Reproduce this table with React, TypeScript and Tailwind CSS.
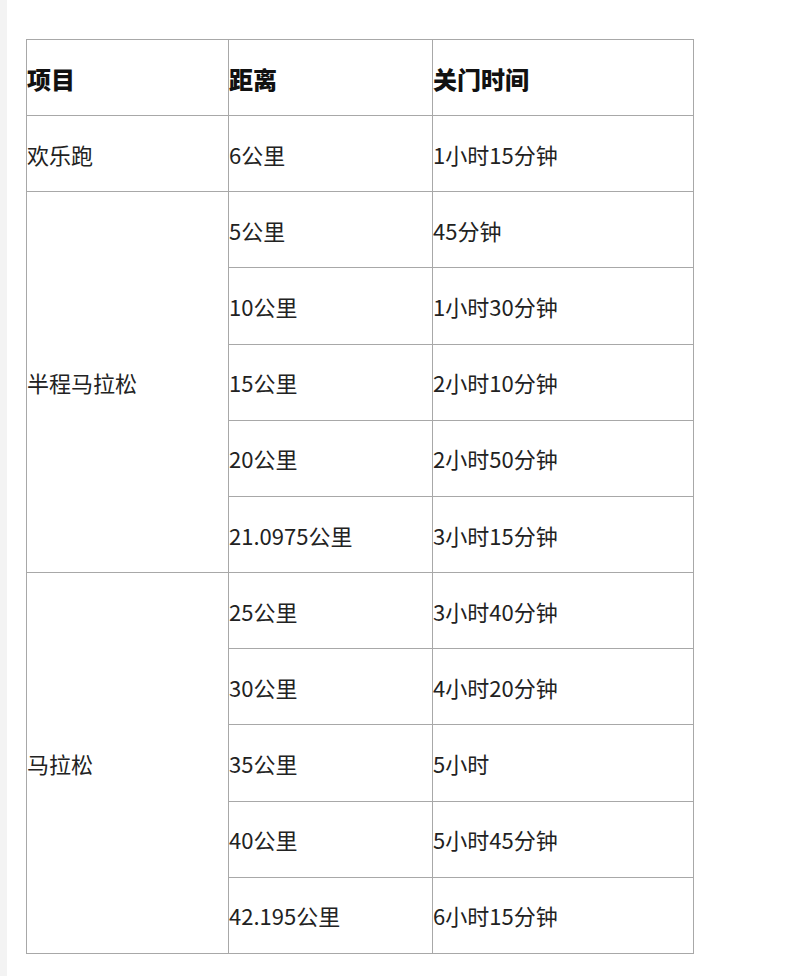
import React from "react";

const font = { fontFamily: '"Noto Sans CJK SC", "Noto Sans", sans-serif' };

type Row = { item?: string; span?: number; dist: string; time: string };

const rows: Row[] = [
  { item: "欢乐跑", span: 1, dist: "6公里", time: "1小时15分钟" },
  { item: "半程马拉松", span: 5, dist: "5公里", time: "45分钟" },
  { dist: "10公里", time: "1小时30分钟" },
  { dist: "15公里", time: "2小时10分钟" },
  { dist: "20公里", time: "2小时50分钟" },
  { dist: "21.0975公里", time: "3小时15分钟" },
  { item: "马拉松", span: 5, dist: "25公里", time: "3小时40分钟" },
  { dist: "30公里", time: "4小时20分钟" },
  { dist: "35公里", time: "5小时" },
  { dist: "40公里", time: "5小时45分钟" },
  { dist: "42.195公里", time: "6小时15分钟" },
];

export default function App() {
  const cell = "border border-[#a8a8a8] p-0 align-middle text-left h-[76.17px]";
  const head = cell + " font-black text-[24px] text-[#111] pt-[3px]";
  return (
    <div className="flex w-[800px] h-[976px] bg-white text-[#222]" style={font}>
      <div className="w-[7px] h-full bg-[#f3f3f3]" />
      <div className="pl-[19px] pt-[39px]">
        <table className="border-collapse table-fixed w-[667px] text-[22px] leading-none">
          <colgroup>
            <col className="w-[202px]" />
            <col className="w-[204px]" />
            <col className="w-[261px]" />
          </colgroup>
          <thead>
            <tr>
              <th className={head}>项目</th>
              <th className={head}>距离</th>
              <th className={head}>关门时间</th>
            </tr>
          </thead>
          <tbody>
            {rows.map((r, i) => (
              <tr key={i}>
                {r.item && (
                  <td className={cell} rowSpan={r.span}>
                    {r.item}
                  </td>
                )}
                <td className={cell}>{r.dist}</td>
                <td className={cell}>{r.time}</td>
              </tr>
            ))}
          </tbody>
        </table>
      </div>
    </div>
  );
}
